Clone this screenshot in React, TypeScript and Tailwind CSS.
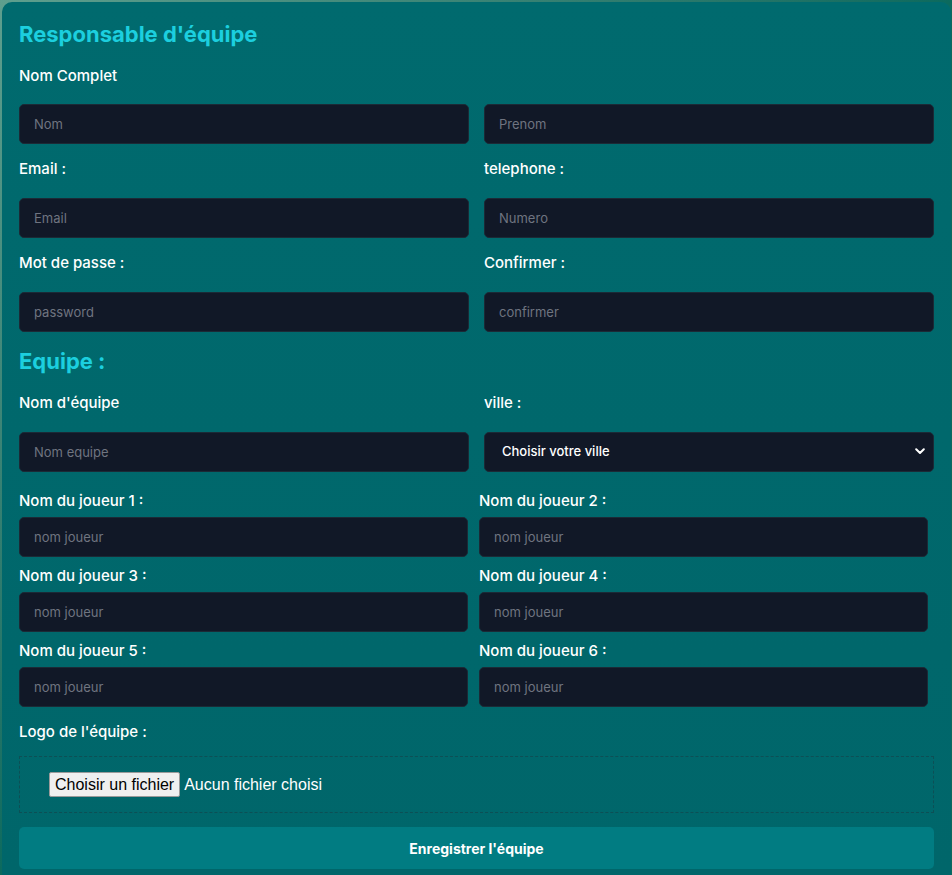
import React from "react";

const font = { fontFamily: "Inter, 'Noto Sans', sans-serif" };

const inputCls =
  "h-10 w-full rounded-[5px] bg-[#111827] px-[14px] text-[13px] text-white placeholder:text-[#6f7480] outline-none border border-[#1b2a36]";

function Field({ label, placeholder, labelGap = "mb-[19px]" }: { label: string; placeholder: string; labelGap?: string }) {
  return (
    <div className="flex flex-col">
      <label className={`text-[15px] leading-5 font-medium text-white ${labelGap}`}>{label}</label>
      <input placeholder={placeholder} className={inputCls} />
    </div>
  );
}

export default function App() {
  return (
    <div className="min-h-[875px] w-full bg-gradient-to-br from-[#5e9f8e] via-[#0b6a5e] to-[#0b6a5e] pt-[2px] pl-[2px] overflow-hidden" style={font}>
      <div className="w-[949px] rounded-t-[10px] bg-gradient-to-b from-[#006a6e] to-[#00666a] px-[17px] pt-[18px] pb-[6px]">
        <h2 className="text-[22px] leading-7 font-bold text-[#1ccfdf] mb-[18px]">Responsable d'équipe</h2>

        <div className="text-[15px] leading-5 font-medium text-white mb-[18px]">Nom Complet</div>
        <div className="grid grid-cols-2 gap-x-[15px]">
          <input placeholder="Nom" className={inputCls} />
          <input placeholder="Prenom" className={inputCls} />
        </div>

        <div className="grid grid-cols-2 gap-x-[15px] mt-[15px]">
          <Field label="Email :" placeholder="Email" />
          <Field label="telephone :" placeholder="Numero" />
        </div>
        <div className="grid grid-cols-2 gap-x-[15px] mt-[15px]">
          <Field label="Mot de passe :" placeholder="password" />
          <Field label="Confirmer :" placeholder="confirmer" />
        </div>

        <h2 className="text-[22px] leading-7 font-bold text-[#1ccfdf] mt-[15px] mb-[18px]">Equipe :</h2>

        <div className="grid grid-cols-2 gap-x-[15px]">
          <Field label="Nom d'équipe" placeholder="Nom equipe" />
          <div className="flex flex-col">
            <label className="text-[15px] leading-5 font-medium text-white mb-[19px]">ville :</label>
            <div className="relative">
              <select className="appearance-none h-10 w-full rounded-[5px] bg-[#111827] pl-[17px] pr-8 text-[13px] font-medium text-white outline-none border border-[#1b2a36]">
                <option>Choisir votre ville</option>
              </select>
              <svg className="pointer-events-none absolute right-[9px] top-[16px]" width="10" height="7" viewBox="0 0 10 7">
                <path d="M1.2 1.2 L5 5 L8.8 1.2" fill="none" stroke="white" strokeWidth="2" strokeLinecap="round" strokeLinejoin="round" />
              </svg>
            </div>
          </div>
        </div>

        <div className="grid grid-cols-2 gap-x-[11px] gap-y-[9px] mt-[19px] pr-[6px]">
          {[1, 2, 3, 4, 5, 6].map((n) => (
            <Field key={n} label={`Nom du joueur ${n} :`} placeholder="nom joueur" labelGap="mb-[6px]" />
          ))}
        </div>

        <div className="text-[15px] leading-5 font-medium text-white mt-[15px] mb-[14px]">Logo de l'équipe :</div>
        <div className="h-[57px] border border-dashed border-[#0d4f55] flex items-center pl-[29px]" style={{ fontFamily: "'Liberation Sans', Arial, sans-serif" }}>
          <span className="bg-[#efefef] text-black text-[16px] leading-[23px] px-[5px] border border-[#9a9a9a] rounded-[2px]">Choisir un fichier</span>
          <span className="text-white text-[16px] ml-[4px]">Aucun fichier choisi</span>
        </div>

        <button className="mt-[14px] h-[42px] w-full rounded-[5px] bg-[#017c82] text-[14px] font-bold text-white">
          Enregistrer l'équipe
        </button>
      </div>
    </div>
  );
}
